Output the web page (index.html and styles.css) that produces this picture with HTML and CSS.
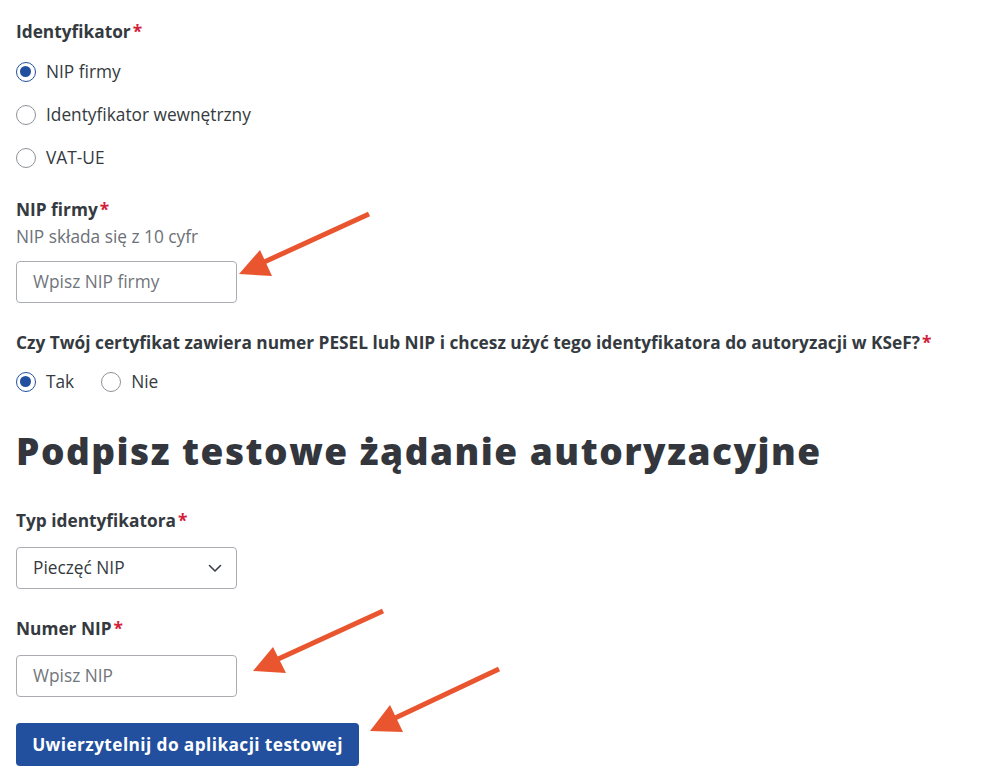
FILE: index.html
```html
<!DOCTYPE html>
<html lang="pl">
  <head>
    <meta charset="UTF-8" />
    <meta name="viewport" content="width=device-width, initial-scale=1.0" />
    <title>Uwierzytelnienie testowe</title>
    <link rel="stylesheet" href="styles.css">
  </head>
  <body>
    <div class="page">
      <form class="auth-form">
        <fieldset class="field">
          <div class="label">Identyfikator<span class="req">*</span></div>
          <div class="radio-list">
            <label class="radio"><span class="dot checked"></span>NIP firmy</label>
            <label class="radio"><span class="dot"></span>Identyfikator wewnętrzny</label>
            <label class="radio"><span class="dot"></span>VAT-UE</label>
          </div>
        </fieldset>

        <div class="field field-nip">
          <div class="label">NIP firmy<span class="req">*</span></div>
          <div class="hint">NIP składa się z 10 cyfr</div>
          <div class="input">Wpisz NIP firmy</div>
        </div>

        <fieldset class="field field-question">
          <div class="label">Czy Twój certyfikat zawiera numer PESEL lub NIP i chcesz użyć tego identyfikatora do autoryzacji w KSeF?<span class="req">*</span></div>
          <div class="radio-inline">
            <label class="radio"><span class="dot checked"></span>Tak</label>
            <label class="radio"><span class="dot"></span>Nie</label>
          </div>
        </fieldset>

        <h2 class="section-title">Podpisz testowe żądanie autoryzacyjne</h2>

        <div class="field field-type">
          <div class="label">Typ identyfikatora<span class="req">*</span></div>
          <div class="input select">
            <span>Pieczęć NIP</span>
            <svg width="14" height="9" viewBox="0 0 14 9"><path d="M1.5 1.5 L7 7 L12.5 1.5" fill="none" stroke="#3a3f45" stroke-width="1.6" stroke-linecap="round" stroke-linejoin="round"/></svg>
          </div>
        </div>

        <div class="field field-number">
          <div class="label">Numer NIP<span class="req">*</span></div>
          <div class="input">Wpisz NIP</div>
        </div>

        <button type="button" class="submit">Uwierzytelnij do aplikacji testowej</button>
      </form>

      <!-- annotation arrows drawn over the form -->
      <svg class="arrows" width="1000" height="784" viewBox="0 0 1000 784">
        <g fill="#e9552f" stroke="#e9552f">
          <line x1="369" y1="214" x2="262" y2="263" stroke-width="5" />
          <polygon points="239,274 260,250 272,276" stroke="none" />
          <line x1="383" y1="611" x2="276" y2="660" stroke-width="5" />
          <polygon points="253,671 273,647 286,673" stroke="none" />
          <line x1="499" y1="669" x2="393" y2="719" stroke-width="5" />
          <polygon points="370,731 390,705 403,732" stroke="none" />
        </g>
      </svg>
    </div>
  </body>
</html>
```

FILE: styles.css
```css
* {
  margin: 0;
  padding: 0;
  box-sizing: border-box;
}

:root {
  --text-color: #343a40;
  --muted-color: #6c7178;
  --placeholder-color: #70757b;
  --border-color: #a9adb2;
  --primary-color: #224f9e;
  --required-color: #d3203a;
}

body {
  font-family: "Open Sans", "Liberation Sans", sans-serif;
  color: var(--text-color);
  background: #ffffff;
  font-size: 17.3px;
  line-height: 24px;
}

.page {
  position: relative;
  width: 1000px;
  height: 784px;
  overflow: hidden;
}

.auth-form {
  padding: 20px 16px;
  display: flex;
  flex-direction: column;
}

fieldset {
  border: none;
}

.label {
  font-weight: 700;
  font-size: 17.3px;
  line-height: 24px;
  color: var(--text-color);
}

.req {
  color: var(--required-color);
  margin-left: 2px;
}

.hint {
  margin-top: 3px;
  color: var(--muted-color);
}

.radio-list {
  display: flex;
  flex-direction: column;
  gap: 19px;
  margin-top: 16px;
}

.radio-inline {
  display: flex;
  gap: 27px;
  margin-top: 15px;
}

.radio {
  display: flex;
  align-items: center;
  gap: 10px;
  font-size: 17.3px;
  line-height: 24px;
  color: var(--text-color);
}

.dot {
  width: 20px;
  height: 20px;
  border-radius: 50%;
  border: 1px solid #8e9297;
  background: #fff;
  position: relative;
}

.dot.checked {
  border: 1.5px solid var(--primary-color);
}

.dot.checked::after {
  content: "";
  position: absolute;
  left: 3px;
  top: 3px;
  width: 11px;
  height: 11px;
  border-radius: 50%;
  background: var(--primary-color);
}

.field-nip {
  margin-top: 28px;
}

.field-question {
  margin-top: 28px;
}

.input {
  width: 221px;
  height: 42px;
  border: 1px solid var(--border-color);
  border-radius: 4px;
  padding: 0 16px;
  display: flex;
  align-items: center;
  color: var(--placeholder-color);
  font-size: 17.3px;
  margin-top: 12px;
}

.select {
  justify-content: space-between;
  color: var(--text-color);
  margin-top: 14px;
  padding-right: 14px;
}

.section-title {
  margin-top: 35px;
  font-size: 37px;
  line-height: 44px;
  font-weight: 800;
  letter-spacing: 1.5px;
  color: #33373d;
}

.field-type {
  margin-top: 36px;
}

.field-number {
  margin-top: 28px;
}

.field-number .input {
  margin-top: 14px;
}

.submit {
  margin-top: 26px;
  width: 343px;
  height: 43px;
  border: none;
  border-radius: 4px;
  background: var(--primary-color);
  color: #ffffff;
  font-family: "Open Sans", "Liberation Sans", sans-serif;
  font-weight: 700;
  font-size: 17.3px;
  letter-spacing: 0.4px;
}

.arrows {
  position: absolute;
  top: 0;
  left: 0;
  pointer-events: none;
}
```
